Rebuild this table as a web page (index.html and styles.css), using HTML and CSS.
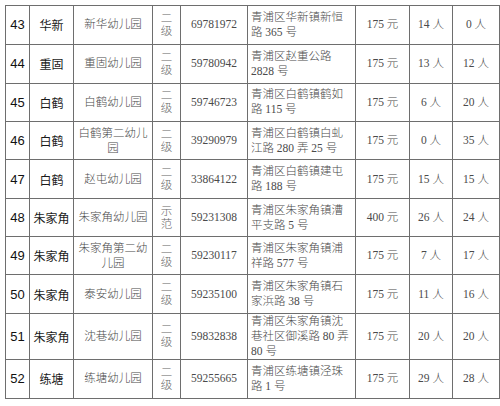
FILE: index.html
```html
<!DOCTYPE html>
<html lang="zh-CN">
<head>
<meta charset="utf-8">
<title>青浦区幼儿园</title>
<link rel="stylesheet" href="styles.css">
</head>
<body>
<table class="grid">
  <colgroup>
    <col class="c-no"><col class="c-town"><col class="c-name"><col class="c-lvl"><col class="c-tel"><col class="c-addr"><col class="c-fee"><col class="c-a"><col class="c-b">
  </colgroup>
  <tbody>
    <tr class="r39"><td class="no">43</td><td class="town">华新</td><td class="sf">新华幼儿园</td><td class="sf lvl">二<br>级</td><td class="sf">69781972</td><td class="sf addr">青浦区华新镇新恒<br>路 365 号</td><td class="sf">175 元</td><td class="sf">14 人</td><td class="sf">0 人</td></tr>
    <tr class="r39"><td class="no">44</td><td class="town">重固</td><td class="sf">重固幼儿园</td><td class="sf lvl">二<br>级</td><td class="sf">59780942</td><td class="sf addr">青浦区赵重公路<br>2828 号</td><td class="sf">175 元</td><td class="sf">13 人</td><td class="sf">12 人</td></tr>
    <tr class="r39"><td class="no">45</td><td class="town">白鹤</td><td class="sf">白鹤幼儿园</td><td class="sf lvl">二<br>级</td><td class="sf">59746723</td><td class="sf addr">青浦区白鹤镇鹤如<br>路 115 号</td><td class="sf">175 元</td><td class="sf">6 人</td><td class="sf">20 人</td></tr>
    <tr class="r38"><td class="no">46</td><td class="town">白鹤</td><td class="sf">白鹤第二幼儿<br>园</td><td class="sf lvl">二<br>级</td><td class="sf">39290979</td><td class="sf addr">青浦区白鹤镇白虬<br>江路 280 弄 25 号</td><td class="sf">175 元</td><td class="sf">0 人</td><td class="sf">35 人</td></tr>
    <tr class="r39"><td class="no">47</td><td class="town">白鹤</td><td class="sf">赵屯幼儿园</td><td class="sf lvl">二<br>级</td><td class="sf">33864122</td><td class="sf addr">青浦区白鹤镇建屯<br>路 188 号</td><td class="sf">175 元</td><td class="sf">15 人</td><td class="sf">15 人</td></tr>
    <tr class="r38"><td class="no">48</td><td class="town">朱家角</td><td class="sf">朱家角幼儿园</td><td class="sf lvl">示<br>范</td><td class="sf">59231308</td><td class="sf addr">青浦区朱家角镇漕<br>平支路 5 号</td><td class="sf">400 元</td><td class="sf">26 人</td><td class="sf">24 人</td></tr>
    <tr class="r38"><td class="no">49</td><td class="town">朱家角</td><td class="sf">朱家角第二幼<br>儿园</td><td class="sf lvl">二<br>级</td><td class="sf">59230117</td><td class="sf addr">青浦区朱家角镇浦<br>祥路 577 号</td><td class="sf">175 元</td><td class="sf">7 人</td><td class="sf">17 人</td></tr>
    <tr class="r39"><td class="no">50</td><td class="town">朱家角</td><td class="sf">泰安幼儿园</td><td class="sf lvl">二<br>级</td><td class="sf">59235100</td><td class="sf addr">青浦区朱家角镇石<br>家浜路 38 号</td><td class="sf">175 元</td><td class="sf">11 人</td><td class="sf">16 人</td></tr>
    <tr class="r44"><td class="no">51</td><td class="town">朱家角</td><td class="sf">沈巷幼儿园</td><td class="sf lvl">二<br>级</td><td class="sf">59832838</td><td class="sf addr">青浦区朱家角镇沈<br>巷社区御溪路 80 弄<br>80 号</td><td class="sf">175 元</td><td class="sf">20 人</td><td class="sf">20 人</td></tr>
    <tr class="r40"><td class="no">52</td><td class="town">练塘</td><td class="sf">练塘幼儿园</td><td class="sf lvl">二<br>级</td><td class="sf">59255665</td><td class="sf addr">青浦区练塘镇泾珠<br>路 1 号</td><td class="sf">175 元</td><td class="sf">29 人</td><td class="sf">28 人</td></tr>
  </tbody>
</table>
</body>
</html>
```
FILE: styles.css
```css
html, body {
  margin: 0;
  padding: 0;
  background: #ffffff;
}
body {
  padding: 5px 0 0 5px;
}
.grid {
  border-collapse: collapse;
  table-layout: fixed;
  width: 495px;
}
.grid td {
  border: 1px solid #6e6e6e;
  padding: 0;
  text-align: center;
  vertical-align: middle;
  white-space: nowrap;
  overflow: hidden;
}
.c-no { width: 24px; }
.c-town { width: 44px; }
.c-name { width: 79px; }
.c-lvl { width: 28px; }
.c-tel { width: 67px; }
.c-addr { width: 108px; }
.c-fee { width: 54px; }
.c-a { width: 43px; }
.c-b { width: 47px; }
.r38 { height: 38px; }
.r39 { height: 38.8px; }
.r40 { height: 39px; }
.r44 { height: 43px; }
.no {
  font-family: "Liberation Sans", "Noto Sans CJK SC", sans-serif;
  font-size: 13px;
  color: #111;
}
.town {
  font-family: "Noto Sans CJK SC", sans-serif;
  font-size: 12px;
  color: #1a1a1a;
  font-weight: 400;
}
.sf {
  font-family: "Liberation Serif", "Noto Sans CJK SC", serif;
  font-size: 11.5px;
  line-height: 15px;
  color: #4a4a4a;
  font-weight: 300;
}
.lvl {
  line-height: 13px;
  color: #666;
}
.grid td.addr {
  text-align: left;
  padding-left: 3px;
}
```
